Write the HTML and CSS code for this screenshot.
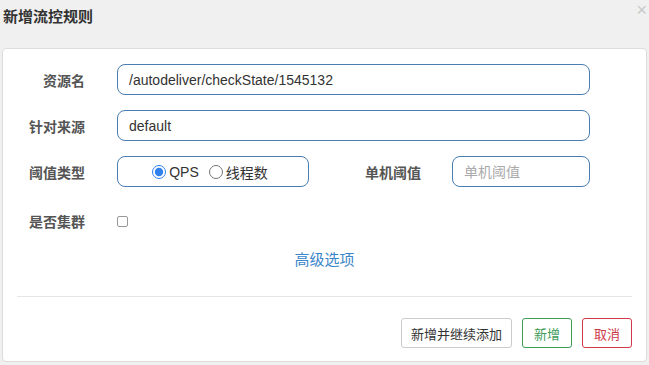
FILE: index.html
```html
<!DOCTYPE html>
<html lang="zh-CN">
<head>
    <meta charset="UTF-8">
    <title>新增流控规则</title>
    <link rel="stylesheet" href="styles.css">
</head>
<body>
<div class="dialog">
    <div class="dialog-header">
        <h3>新增流控规则</h3>
        <span class="close">&times;</span>
    </div>

    <div class="panel">
        <form class="form">
            <div class="row">
                <label class="label">资源名</label>
                <input class="input" type="text" value="/autodeliver/checkState/1545132">
            </div>
            <div class="row">
                <label class="label">针对来源</label>
                <input class="input" type="text" value="default">
            </div>
            <div class="row">
                <label class="label">阈值类型</label>
                <div class="radio-box">
                    <label class="radio"><input type="radio" name="grade" checked>QPS</label>
                    <label class="radio"><input type="radio" name="grade">线程数</label>
                </div>
                <label class="label label-wide">单机阈值</label>
                <input class="input input-small" type="text" placeholder="单机阈值">
            </div>
            <div class="row row-check">
                <label class="label">是否集群</label>
                <input class="check" type="checkbox">
            </div>
            <div class="advanced">
                <a href="#">高级选项</a>
            </div>
        </form>

        <div class="footer">
            <button class="btn" type="button">新增并继续添加</button>
            <button class="btn btn-ok" type="button">新增</button>
            <button class="btn btn-cancel" type="button">取消</button>
        </div>
    </div>
</div>
</body>
</html>
```
FILE: styles.css
```css
body {
    margin: 0;
    background-color: #f0f0f0;
    font-family: "Helvetica Neue", Helvetica, Arial, "Noto Sans CJK SC", sans-serif;
    color: #333;
}

.dialog {
    width: 649px;
    height: 365px;
    box-sizing: border-box;
    padding: 0 2px 3px 2px;
}

.dialog-header {
    position: relative;
    height: 48px;
}

.dialog-header h3 {
    margin: 0;
    padding: 7px 0 0 1px;
    font-size: 15px;
    line-height: 20px;
    font-weight: bold;
    color: #333;
}

.close {
    position: absolute;
    top: 1px;
    right: 0;
    font-size: 18px;
    line-height: 18px;
    color: #c8c8c8;
}

.panel {
    height: 314px;
    box-sizing: border-box;
    background: #fff;
    border: 1px solid #dcdcdc;
    border-radius: 4px;
    padding: 0 14px;
}

.form {
    padding: 15px 42px 0 0;
}

.row {
    display: flex;
    align-items: center;
    margin-bottom: 15px;
}

.label {
    width: 68px;
    flex: none;
    text-align: right;
    margin-right: 32px;
    font-size: 14px;
    font-weight: bold;
    color: #555;
}

.label-wide {
    width: 112px;
    margin-right: 31px;
}

.input {
    flex: 1;
    height: 31px;
    box-sizing: border-box;
    border: 1px solid #4a7db0;
    border-radius: 8px;
    padding: 0 11px;
    font-family: inherit;
    font-size: 14px;
    color: #333;
    outline: none;
}

.input::placeholder {
    color: #aaa;
}

.input-small {
    flex: none;
    width: 138px;
}

.radio-box {
    width: 193px;
    height: 31px;
    box-sizing: border-box;
    border: 1px solid #4a7db0;
    border-radius: 8px;
    display: flex;
    align-items: center;
    justify-content: center;
    gap: 10px;
    padding-right: 6px;
    font-size: 14px;
    color: #333;
}

.radio {
    display: flex;
    align-items: center;
}

.radio input {
    margin: 0 3px 0 0;
    width: 14px;
    height: 14px;
    accent-color: #2f80ed;
}

.row-check {
    margin-top: 24px;
    margin-bottom: 0;
}

.check {
    appearance: none;
    width: 11px;
    height: 11px;
    margin: 0;
    border: 1px solid #999;
    border-radius: 2px;
    background: #fff;
}

.advanced {
    text-align: center;
    padding: 17px 0 0 42px;
    height: 20px;
}

.advanced a {
    font-size: 15px;
    color: #3a86c8;
    text-decoration: none;
}

.footer {
    margin-top: 28px;
    border-top: 1px solid #e5e5e5;
    padding-top: 21px;
    display: flex;
    justify-content: flex-end;
    gap: 10px;
}

.btn {
    height: 30px;
    padding: 0 9px;
    background: #fff;
    border: 1px solid #ccc;
    border-radius: 3px;
    font-family: inherit;
    font-size: 13px;
    color: #333;
}

.btn-ok {
    border-color: #3d9b56;
    color: #3d9b56;
    width: 50px;
    padding: 0;
}

.btn-cancel {
    border-color: #d0394a;
    color: #d0394a;
    width: 50px;
    padding: 0;
}
```
